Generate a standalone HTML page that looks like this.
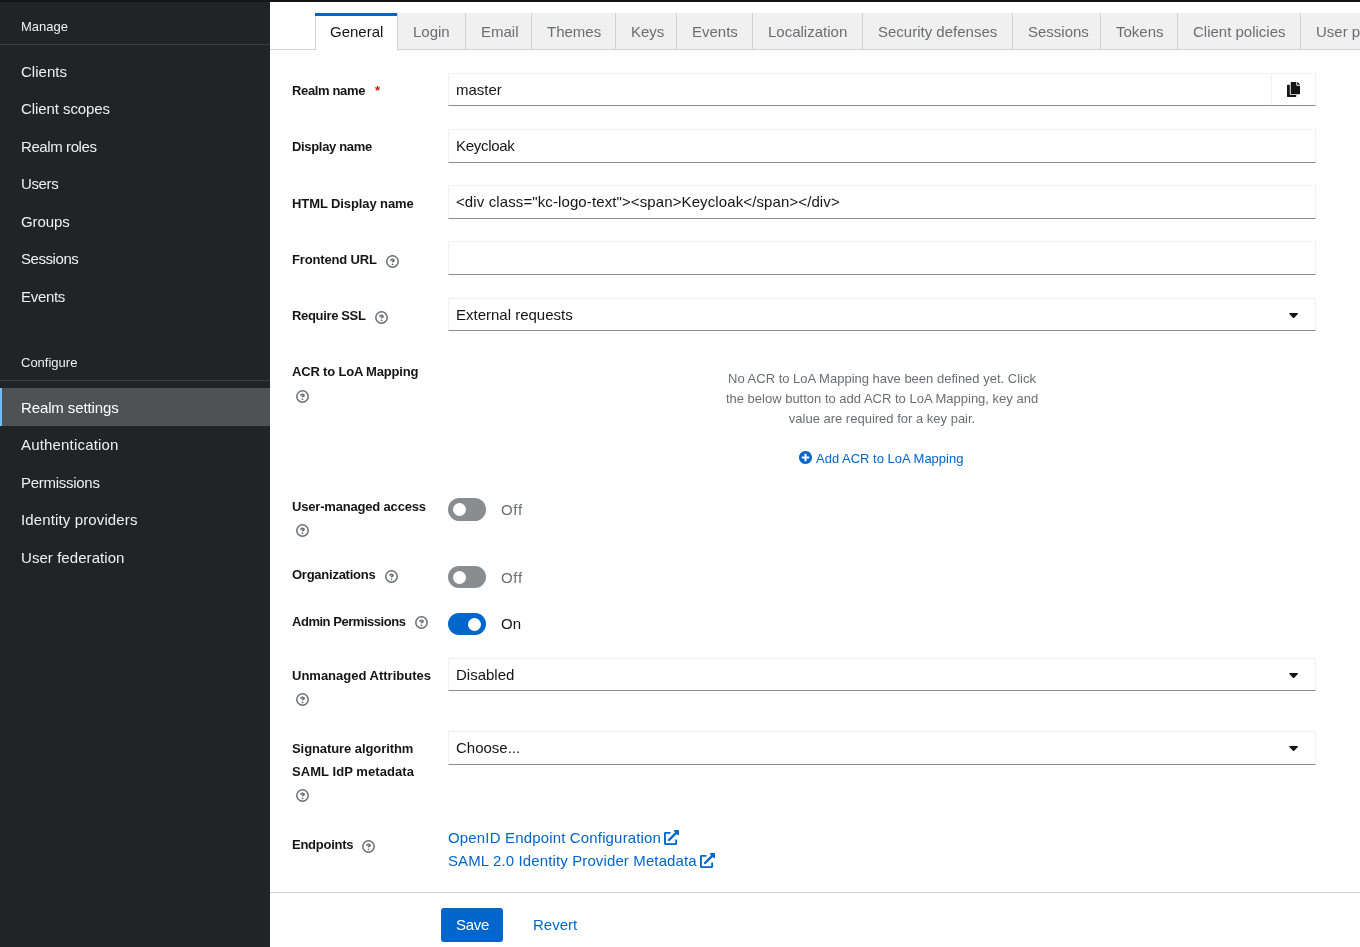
<!DOCTYPE html>
<html><head><meta charset="utf-8">
<style>
*{box-sizing:border-box;margin:0;padding:0}
html,body{width:1360px;height:947px;overflow:hidden;background:#fff;font-family:"Liberation Sans",sans-serif;position:relative}
.a{position:absolute}
.t{will-change:transform;position:absolute;white-space:nowrap;line-height:1}
.nav{font-size:15px;color:#f0f0f0;left:21px}
.sec{font-size:13px;color:#f0f0f0;left:21px}
.sdiv{left:0;width:270px;height:1px;background:#3c3f42}
.tab{top:13px;height:37px;background:#f0f0f0;border-left:1px solid #d2d2d2;border-bottom:1px solid #d2d2d2}
.tt{font-size:15px;color:#6a6e73;top:23.5px}
.lbl{font-size:13px;font-weight:bold;color:#151515;left:292px}
.inp{left:448px;width:868px;border:1px solid #f0f0f0;border-bottom:1px solid #8a8d90;background:#fff}
.it{font-size:15px;color:#151515;left:456px}
.lnk{color:#0066cc}
</style></head><body>
<div class="a" style="left:0;top:0;width:1360px;height:2px;background:#151515"></div>
<div class="a" style="left:0;top:2px;width:270px;height:945px;background:#212427"></div>
<div class="t sec" style="top:20px">Manage</div>
<div class="a sdiv" style="top:44px"></div>
<div class="t nav" style="top:64px;letter-spacing:0.02px">Clients</div>
<div class="t nav" style="top:101px;letter-spacing:-0.08px">Client scopes</div>
<div class="t nav" style="top:138.5px;letter-spacing:-0.41px">Realm roles</div>
<div class="t nav" style="top:176px;letter-spacing:-0.38px">Users</div>
<div class="t nav" style="top:213.5px;letter-spacing:-0.1px">Groups</div>
<div class="t nav" style="top:251px;letter-spacing:-0.44px">Sessions</div>
<div class="t nav" style="top:289px;letter-spacing:-0.3px">Events</div>
<div class="t sec" style="top:356px">Configure</div>
<div class="a sdiv" style="top:380px"></div>
<div class="a" style="left:0;top:388px;width:270px;height:38px;background:#4f5255"></div>
<div class="a" style="left:0;top:388px;width:2px;height:38px;background:#73bcf7"></div>
<div class="t nav" style="top:400px;color:#fff;letter-spacing:-0.12px">Realm settings</div>
<div class="t nav" style="top:437px;letter-spacing:0.18px">Authentication</div>
<div class="t nav" style="top:475px;letter-spacing:-0.28px">Permissions</div>
<div class="t nav" style="top:512px;letter-spacing:0.13px">Identity providers</div>
<div class="t nav" style="top:550px;letter-spacing:0.06px">User federation</div>
<div class="a" style="left:270px;top:49px;width:45px;height:1px;background:#d2d2d2"></div>
<div class="a" style="left:315px;top:13px;width:82px;height:37px;background:#fff;border-left:1px solid #d2d2d2"></div>
<div class="a" style="left:315px;top:13px;width:82px;height:3px;background:#0066cc"></div>
<div class="t tt" style="left:330px;color:#151515">General</div>
<div class="a tab" style="left:397px;width:68px"></div><div class="t tt" style="left:413px">Login</div>
<div class="a tab" style="left:465px;width:66px"></div><div class="t tt" style="left:481px">Email</div>
<div class="a tab" style="left:531px;width:84px"></div><div class="t tt" style="left:547px">Themes</div>
<div class="a tab" style="left:615px;width:61px"></div><div class="t tt" style="left:631px">Keys</div>
<div class="a tab" style="left:676px;width:76px"></div><div class="t tt" style="left:692px">Events</div>
<div class="a tab" style="left:752px;width:110px"></div><div class="t tt" style="left:768px">Localization</div>
<div class="a tab" style="left:862px;width:150px"></div><div class="t tt" style="left:878px">Security defenses</div>
<div class="a tab" style="left:1012px;width:88px"></div><div class="t tt" style="left:1028px">Sessions</div>
<div class="a tab" style="left:1100px;width:77px"></div><div class="t tt" style="left:1116px">Tokens</div>
<div class="a tab" style="left:1177px;width:123px"></div><div class="t tt" style="left:1193px">Client policies</div>
<div class="a tab" style="left:1300px;width:100px"></div><div class="t tt" style="left:1316px">User profile</div>
<div class="t lbl" style="top:84px;letter-spacing:-0.356px">Realm name</div>
<div class="t lbl" style="top:140px;letter-spacing:-0.327px">Display name</div>
<div class="t lbl" style="top:197px;letter-spacing:-0.094px">HTML Display name</div>
<div class="t lbl" style="top:253px;letter-spacing:-0.164px">Frontend URL</div>
<div class="t lbl" style="top:309px;letter-spacing:-0.34px">Require SSL</div>
<div class="t lbl" style="top:365px;letter-spacing:-0.176px">ACR to LoA Mapping</div>
<div class="t lbl" style="top:500px;letter-spacing:-0.183px">User-managed access</div>
<div class="t lbl" style="top:568px;letter-spacing:-0.25px">Organizations</div>
<div class="t lbl" style="top:615px;letter-spacing:-0.469px">Admin Permissions</div>
<div class="t lbl" style="top:669px;letter-spacing:0px">Unmanaged Attributes</div>
<div class="t lbl" style="top:742px;letter-spacing:-0.078px">Signature algorithm</div>
<div class="t lbl" style="top:765px;letter-spacing:0.062px">SAML IdP metadata</div>
<div class="t lbl" style="top:838px;letter-spacing:-0.25px">Endpoints</div>
<div class="t" style="left:375px;top:84px;font-size:13px;color:#c9190b;font-weight:bold">*</div>
<div class="a inp" style="top:73px;height:33px"></div>
<div class="t it" style="top:82px;letter-spacing:0px">master</div>
<div class="a" style="left:1271px;top:73px;width:45px;height:32px;border-left:1px solid #f0f0f0"></div>
<div class="a inp" style="top:129px;height:34px"></div>
<div class="t it" style="top:138px;letter-spacing:-0.3px">Keycloak</div>
<div class="a inp" style="top:185px;height:34px"></div>
<div class="t it" style="top:194px;letter-spacing:0.11px">&lt;div class="kc-logo-text"&gt;&lt;span&gt;Keycloak&lt;/span&gt;&lt;/div&gt;</div>
<div class="a inp" style="top:241px;height:34px"></div>
<div class="a inp" style="top:298px;height:33px"></div>
<div class="t it" style="top:307px;letter-spacing:0px">External requests</div>
<div class="a inp" style="top:658px;height:33px"></div>
<div class="t it" style="top:667px;letter-spacing:0px">Disabled</div>
<div class="a inp" style="top:731px;height:34px"></div>
<div class="t it" style="top:740px;letter-spacing:0px">Choose...</div>
<svg class="a" style="left:386.0px;top:255.1px" width="13" height="13" viewBox="0 0 13 13"><circle cx="6.5" cy="6.5" r="5.7" fill="none" stroke="#6a6e73" stroke-width="1.5"/><path d="M4.9 5.3C4.9 4.7 5.6 4.4 6.5 4.4C7.4 4.4 8.1 4.8 8.1 5.4C8.1 6.1 7.2 6.3 6.5 6.6" fill="none" stroke="#6a6e73" stroke-width="1.6" stroke-linecap="round"/><circle cx="6.5" cy="9.3" r="0.9" fill="#6a6e73"/></svg>
<svg class="a" style="left:374.9px;top:310.6px" width="13" height="13" viewBox="0 0 13 13"><circle cx="6.5" cy="6.5" r="5.7" fill="none" stroke="#6a6e73" stroke-width="1.5"/><path d="M4.9 5.3C4.9 4.7 5.6 4.4 6.5 4.4C7.4 4.4 8.1 4.8 8.1 5.4C8.1 6.1 7.2 6.3 6.5 6.6" fill="none" stroke="#6a6e73" stroke-width="1.6" stroke-linecap="round"/><circle cx="6.5" cy="9.3" r="0.9" fill="#6a6e73"/></svg>
<svg class="a" style="left:296.0px;top:390.0px" width="13" height="13" viewBox="0 0 13 13"><circle cx="6.5" cy="6.5" r="5.7" fill="none" stroke="#6a6e73" stroke-width="1.5"/><path d="M4.9 5.3C4.9 4.7 5.6 4.4 6.5 4.4C7.4 4.4 8.1 4.8 8.1 5.4C8.1 6.1 7.2 6.3 6.5 6.6" fill="none" stroke="#6a6e73" stroke-width="1.6" stroke-linecap="round"/><circle cx="6.5" cy="9.3" r="0.9" fill="#6a6e73"/></svg>
<svg class="a" style="left:295.9px;top:523.8px" width="13" height="13" viewBox="0 0 13 13"><circle cx="6.5" cy="6.5" r="5.7" fill="none" stroke="#6a6e73" stroke-width="1.5"/><path d="M4.9 5.3C4.9 4.7 5.6 4.4 6.5 4.4C7.4 4.4 8.1 4.8 8.1 5.4C8.1 6.1 7.2 6.3 6.5 6.6" fill="none" stroke="#6a6e73" stroke-width="1.6" stroke-linecap="round"/><circle cx="6.5" cy="9.3" r="0.9" fill="#6a6e73"/></svg>
<svg class="a" style="left:384.9px;top:569.5px" width="13" height="13" viewBox="0 0 13 13"><circle cx="6.5" cy="6.5" r="5.7" fill="none" stroke="#6a6e73" stroke-width="1.5"/><path d="M4.9 5.3C4.9 4.7 5.6 4.4 6.5 4.4C7.4 4.4 8.1 4.8 8.1 5.4C8.1 6.1 7.2 6.3 6.5 6.6" fill="none" stroke="#6a6e73" stroke-width="1.6" stroke-linecap="round"/><circle cx="6.5" cy="9.3" r="0.9" fill="#6a6e73"/></svg>
<svg class="a" style="left:415.1px;top:616.4px" width="13" height="13" viewBox="0 0 13 13"><circle cx="6.5" cy="6.5" r="5.7" fill="none" stroke="#6a6e73" stroke-width="1.5"/><path d="M4.9 5.3C4.9 4.7 5.6 4.4 6.5 4.4C7.4 4.4 8.1 4.8 8.1 5.4C8.1 6.1 7.2 6.3 6.5 6.6" fill="none" stroke="#6a6e73" stroke-width="1.6" stroke-linecap="round"/><circle cx="6.5" cy="9.3" r="0.9" fill="#6a6e73"/></svg>
<svg class="a" style="left:295.9px;top:692.6px" width="13" height="13" viewBox="0 0 13 13"><circle cx="6.5" cy="6.5" r="5.7" fill="none" stroke="#6a6e73" stroke-width="1.5"/><path d="M4.9 5.3C4.9 4.7 5.6 4.4 6.5 4.4C7.4 4.4 8.1 4.8 8.1 5.4C8.1 6.1 7.2 6.3 6.5 6.6" fill="none" stroke="#6a6e73" stroke-width="1.6" stroke-linecap="round"/><circle cx="6.5" cy="9.3" r="0.9" fill="#6a6e73"/></svg>
<svg class="a" style="left:295.9px;top:789.1px" width="13" height="13" viewBox="0 0 13 13"><circle cx="6.5" cy="6.5" r="5.7" fill="none" stroke="#6a6e73" stroke-width="1.5"/><path d="M4.9 5.3C4.9 4.7 5.6 4.4 6.5 4.4C7.4 4.4 8.1 4.8 8.1 5.4C8.1 6.1 7.2 6.3 6.5 6.6" fill="none" stroke="#6a6e73" stroke-width="1.6" stroke-linecap="round"/><circle cx="6.5" cy="9.3" r="0.9" fill="#6a6e73"/></svg>
<svg class="a" style="left:362.0px;top:840.1px" width="13" height="13" viewBox="0 0 13 13"><circle cx="6.5" cy="6.5" r="5.7" fill="none" stroke="#6a6e73" stroke-width="1.5"/><path d="M4.9 5.3C4.9 4.7 5.6 4.4 6.5 4.4C7.4 4.4 8.1 4.8 8.1 5.4C8.1 6.1 7.2 6.3 6.5 6.6" fill="none" stroke="#6a6e73" stroke-width="1.6" stroke-linecap="round"/><circle cx="6.5" cy="9.3" r="0.9" fill="#6a6e73"/></svg>
<svg class="a" style="left:1289px;top:312.7px" width="9" height="5.2" viewBox="4 190 304 172"><path d="M31.3 192h257.3c17.8 0 26.7 21.5 14.1 34.1L174.1 354.8c-7.8 7.8-20.5 7.8-28.3 0L17.2 226.1C4.6 213.5 13.5 192 31.3 192z" fill="#151515"/></svg>
<svg class="a" style="left:1289px;top:672.7px" width="9" height="5.2" viewBox="4 190 304 172"><path d="M31.3 192h257.3c17.8 0 26.7 21.5 14.1 34.1L174.1 354.8c-7.8 7.8-20.5 7.8-28.3 0L17.2 226.1C4.6 213.5 13.5 192 31.3 192z" fill="#151515"/></svg>
<svg class="a" style="left:1289px;top:745.7px" width="9" height="5.2" viewBox="4 190 304 172"><path d="M31.3 192h257.3c17.8 0 26.7 21.5 14.1 34.1L174.1 354.8c-7.8 7.8-20.5 7.8-28.3 0L17.2 226.1C4.6 213.5 13.5 192 31.3 192z" fill="#151515"/></svg>
<svg class="a" style="left:1287px;top:82px" width="13" height="15" viewBox="0 0 448 512"><path fill="#151515" d="M320 448v40c0 13.255-10.745 24-24 24H24c-13.255 0-24-10.745-24-24V120c0-13.255 10.745-24 24-24h72v296c0 30.879 25.121 56 56 56h168zm0-344V0H152c-13.255 0-24 10.745-24 24v368c0 13.255 10.745 24 24 24h272c13.255 0 24-10.745 24-24V128H344c-13.2 0-24-10.8-24-24zm120.971-31.029L375.029 7.029A24 24 0 0 0 358.059 0H352v96h96v-6.059a24 24 0 0 0-7.029-16.97z"/></svg>
<div class="t" style="left:682px;top:368.5px;width:400px;text-align:center;font-size:13px;line-height:20px;color:#6a6e73;white-space:normal">No ACR to LoA Mapping have been defined yet. Click<br>the below button to add ACR to LoA Mapping, key and<br>value are required for a key pair.</div>
<svg class="a" style="left:799px;top:451px" width="13" height="13" viewBox="8 8 496 496"><path fill="#0066cc" d="M256 8C119 8 8 119 8 256s111 248 248 248 248-111 248-248S393 8 256 8zm144 276c0 6.6-5.4 12-12 12h-92v92c0 6.6-5.4 12-12 12h-56c-6.6 0-12-5.4-12-12v-92h-92c-6.6 0-12-5.4-12-12v-56c0-6.6 5.4-12 12-12h92v-92c0-6.6 5.4-12 12-12h56c6.6 0 12 5.4 12 12v92h92c6.6 0 12 5.4 12 12v56z"/></svg>
<div class="t lnk" style="left:816px;top:452px;font-size:13px">Add ACR to LoA Mapping</div>
<div class="a" style="left:448px;top:498px;width:38px;height:23px;border-radius:12px;background:#8a8d90"></div>
<div class="a" style="left:452.9px;top:503.0px;width:13px;height:13px;border-radius:50%;background:#fff"></div>
<div class="t" style="left:501px;top:502.0px;font-size:15px;color:#6a6e73;letter-spacing:0.7px">Off</div>
<div class="a" style="left:448px;top:566px;width:38px;height:22px;border-radius:12px;background:#8a8d90"></div>
<div class="a" style="left:452.9px;top:570.5px;width:13px;height:13px;border-radius:50%;background:#fff"></div>
<div class="t" style="left:501px;top:569.5px;font-size:15px;color:#6a6e73;letter-spacing:0.7px">Off</div>
<div class="a" style="left:448px;top:613px;width:38px;height:22px;border-radius:12px;background:#0066cc"></div>
<div class="a" style="left:467.9px;top:617.5px;width:13px;height:13px;border-radius:50%;background:#fff"></div>
<div class="t" style="left:501px;top:616.0px;font-size:15px;color:#151515;letter-spacing:0px">On</div>
<div class="t lnk" style="left:448px;top:830px;font-size:15px;letter-spacing:0.16px">OpenID Endpoint Configuration</div>
<div class="t lnk" style="left:448px;top:853px;font-size:15px;letter-spacing:0.12px">SAML 2.0 Identity Provider Metadata</div>
<svg class="a" style="left:664px;top:830px" width="15" height="15" viewBox="0 0 512 512"><path fill="#0066cc" d="M432,320H400a16,16,0,0,0-16,16V448H64V128H208a16,16,0,0,0,16-16V80a16,16,0,0,0-16-16H48A48,48,0,0,0,0,112V464a48,48,0,0,0,48,48H400a48,48,0,0,0,48-48V336A16,16,0,0,0,432,320ZM488,0h-128c-21.37,0-32.05,25.91-17,41l35.73,35.73L135,320.37a24,24,0,0,0,0,34L157.67,377a24,24,0,0,0,34,0L435.28,133.32,471,169c15,15,41,4.5,41-17V24A24,24,0,0,0,488,0Z"/></svg>
<svg class="a" style="left:700px;top:853px" width="15" height="15" viewBox="0 0 512 512"><path fill="#0066cc" d="M432,320H400a16,16,0,0,0-16,16V448H64V128H208a16,16,0,0,0,16-16V80a16,16,0,0,0-16-16H48A48,48,0,0,0,0,112V464a48,48,0,0,0,48,48H400a48,48,0,0,0,48-48V336A16,16,0,0,0,432,320ZM488,0h-128c-21.37,0-32.05,25.91-17,41l35.73,35.73L135,320.37a24,24,0,0,0,0,34L157.67,377a24,24,0,0,0,34,0L435.28,133.32,471,169c15,15,41,4.5,41-17V24A24,24,0,0,0,488,0Z"/></svg>
<div class="a" style="left:270px;top:892px;width:1090px;height:1px;background:#d2d2d2"></div>
<div class="a" style="left:441px;top:908px;width:62px;height:34px;background:#0066cc;border-radius:3px"></div>
<div class="t" style="left:455.5px;top:917px;font-size:15px;color:#fff;letter-spacing:-0.25px">Save</div>
<div class="t lnk" style="left:533px;top:917px;font-size:15px">Revert</div>
</body></html>
